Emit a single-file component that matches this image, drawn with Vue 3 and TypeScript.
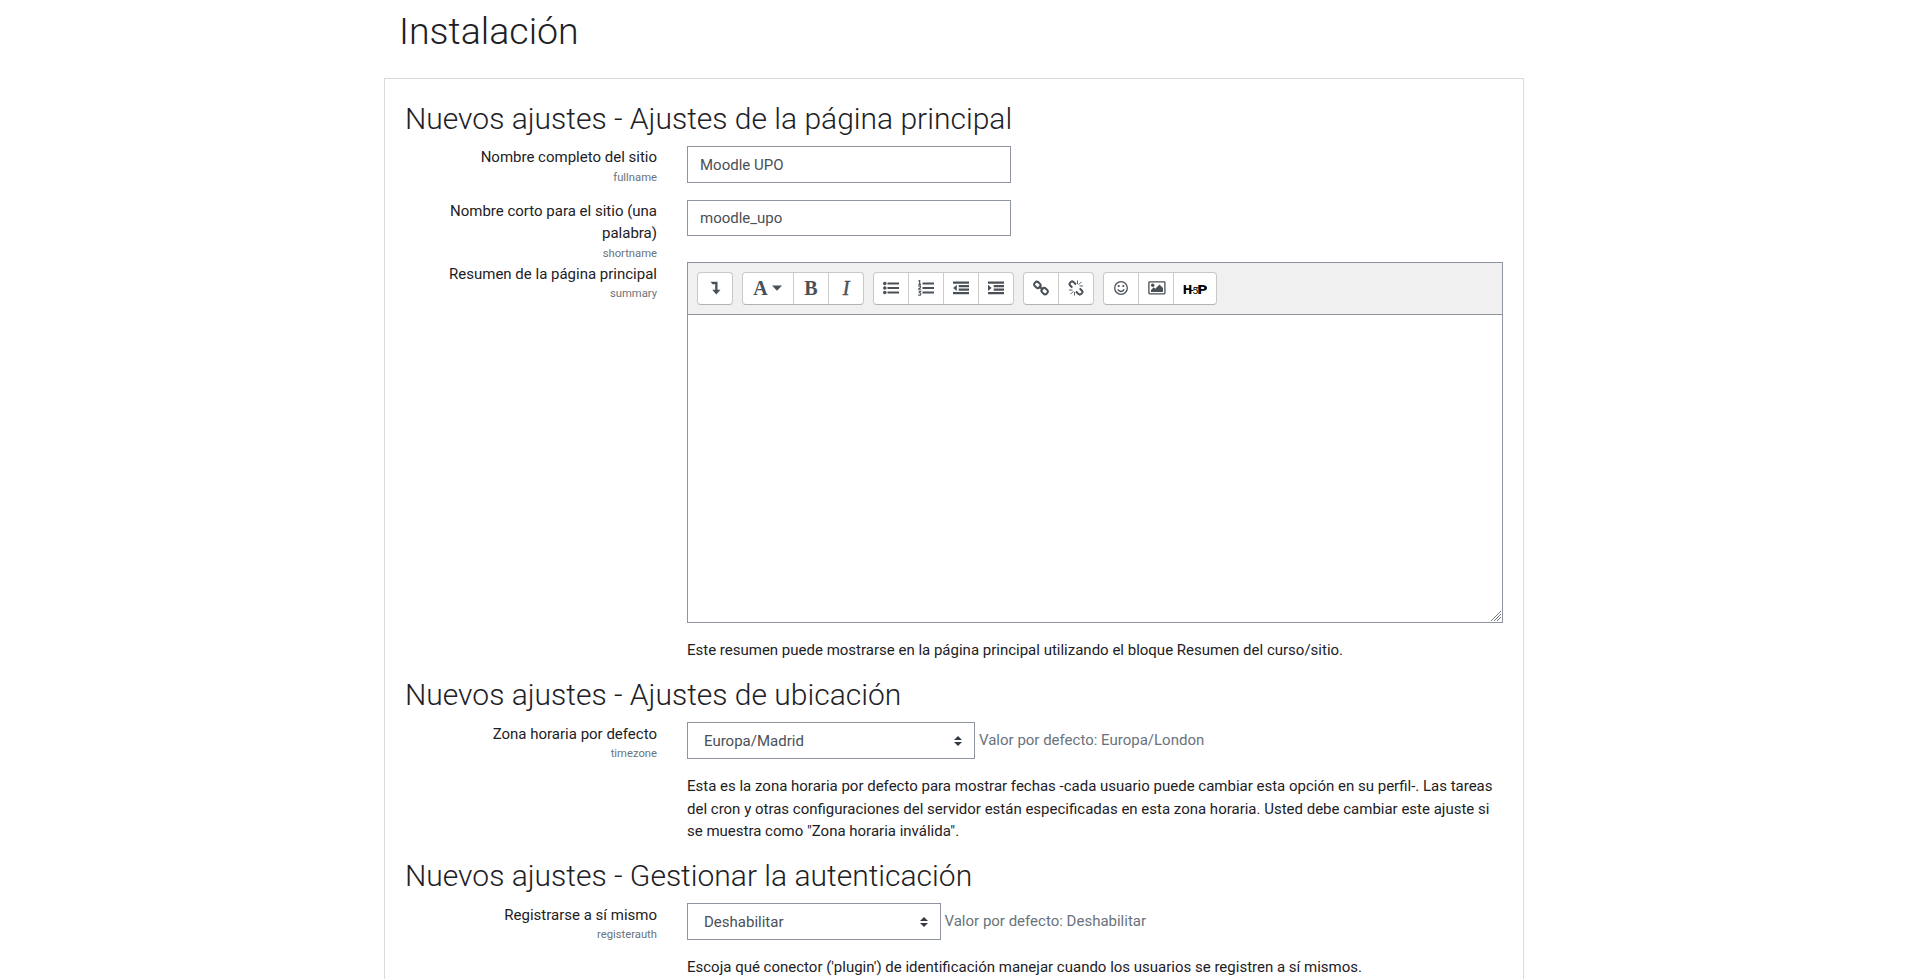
<script setup lang="ts">
interface Tool { name: string; wide?: string }
const groups: Tool[][] = [
  [{ name: 'collapse' }],
  [{ name: 'style', wide: 'w-style' }, { name: 'bold' }, { name: 'italic' }],
  [{ name: 'ul' }, { name: 'ol' }, { name: 'outdent' }, { name: 'indent' }],
  [{ name: 'link' }, { name: 'unlink' }],
  [{ name: 'smile' }, { name: 'image' }, { name: 'h5p', wide: 'w-h5p' }],
]
</script>

<template>
  <main class="page">
    <h1>Instalación</h1>
    <form class="card" @submit.prevent>
      <h3>Nuevos ajustes - Ajustes de la página principal</h3>
      <div class="row r-full">
        <div class="label">Nombre completo del sitio<small>fullname</small></div>
        <div class="field"><input type="text" value="Moodle UPO" /></div>
      </div>
      <div class="row r-short">
        <div class="label">Nombre corto para el sitio (una palabra)<small>shortname</small></div>
        <div class="field"><input type="text" value="moodle_upo" /></div>
      </div>
      <div class="row r-summary">
        <div class="label">Resumen de la página principal<small>summary</small></div>
        <div class="field">
          <div class="editor">
            <div class="toolbar">
              <div v-for="(g, i) in groups" :key="i" class="group">
                <button v-for="t in g" :key="t.name" type="button" :class="t.wide">
                  <svg v-if="t.name === 'collapse'" width="16" height="16" viewBox="0 0 16 16"><path d="M3.500 1.800h7v8h3L9.300 14.400 5.200 9.800h3V4.200H5.500z" /></svg>
                  <template v-else-if="t.name === 'style'">
                    <span class="ch">A</span>
                    <svg width="10" height="16" viewBox="0 0 10 16"><path d="M0 5.500h10L5 10.700z" /></svg>
                  </template>
                  <span v-else-if="t.name === 'bold'" class="ch">B</span>
                  <span v-else-if="t.name === 'italic'" class="ch it">I</span>
                  <svg v-else-if="t.name === 'ul'" width="16" height="16" viewBox="0 0 16 16"><circle cx="1.800" cy="3.500" r="1.800" /><circle cx="1.800" cy="8" r="1.800" /><circle cx="1.800" cy="12.500" r="1.800" /><path d="M4.500 2.400H16v2.200H4.500zM4.500 6.900H16v2.200H4.500zM4.500 11.400H16v2.200H4.500z" /></svg>
                  <svg v-else-if="t.name === 'ol'" width="16" height="16" viewBox="0 0 16 16"><path d="M4.500 2.400H16v2.200H4.500zM4.500 6.900H16v2.200H4.500zM4.500 11.400H16v2.200H4.500z" /><path class="num" d="M.5 1.300L1.700.500v3.900M.4 4.400h2.600M.4 6.700q.2-.8 1.200-.8 1.100 0 1.100.9 0 .7-2.200 2.500h2.500M.5 11.300h2.200l-1.200 1.400q1.400 0 1.400 1.200 0 1.300-1.400 1.300-.8 0-1.200-.5" /></svg>
                  <svg v-else-if="t.name === 'outdent'" width="16" height="16" viewBox="0 0 16 16"><path d="M0 1.500h16v2.200H0zM5.700 5h10.300v2.200H5.700zM5.700 8.500h10.300v2.200H5.700zM0 12h16v2.200H0zM.2 7.900l3.600-3.200v6.400z" /></svg>
                  <svg v-else-if="t.name === 'indent'" width="16" height="16" viewBox="0 0 16 16"><path d="M0 1.500h16v2.200H0zM5.700 5h10.300v2.200H5.700zM5.700 8.500h10.300v2.200H5.700zM0 12h16v2.200H0zM3.600 7.900L0 4.700v6.400z" /></svg>
                  <svg v-else-if="t.name === 'link'" width="16" height="16" viewBox="0 0 16 16"><g class="stroke"><rect x="1.100" y="2.300" width="6.600" height="5.200" rx="2.500" transform="rotate(45 4.400 4.900)" /><rect x="8.300" y="8.500" width="6.600" height="5.200" rx="2.500" transform="rotate(45 11.600 11.100)" /><path d="M6 6l4 4" /></g></svg>
                  <svg v-else-if="t.name === 'unlink'" width="16" height="16" viewBox="0 0 16 16"><path class="stroke" d="M4.300 7.600L2 5.300q-1-1.300 0-2.400l1-1q1.200-1 2.400 0l2.600 2.600M11.700 8.400L14 10.700q1 1.300 0 2.400l-1 1q-1.200 1-2.400 0L8 11.500" /><path class="thin" d="M5.500 11.200l-3 3M6.500 12v3.500M4.500 10H1M10.500 4.800l3-3M9.500 4V.500M11.500 6H15" /></svg>
                  <svg v-else-if="t.name === 'smile'" width="16" height="16" viewBox="0 0 16 16"><circle class="ring" cx="8" cy="8" r="6.300" /><circle cx="5.700" cy="6" r="1.100" /><circle cx="10.300" cy="6" r="1.100" /><path class="ring" d="M4.800 9.300q.9 2.200 3.200 2.200t3.200-2.200" /></svg>
                  <svg v-else-if="t.name === 'image'" class="pic" width="18" height="16" viewBox="0 0 18 16"><rect class="ring" x=".9" y="1.800" width="16" height="12" rx=".7" /><circle cx="4.700" cy="5.300" r="1.700" /><path d="M3 12v-2l2.800-2.800 1.500 1.500L11.500 4.500 15 8v4z" /></svg>
                  <svg v-else class="h5p" width="24" height="16" viewBox="0 0 24 16">
                    <text class="big" x="0" y="14.300" textLength="9" lengthAdjust="spacingAndGlyphs">H</text>
                    <text class="five" x="9.300" y="13.800" textLength="6" lengthAdjust="spacingAndGlyphs">5</text>
                    <text class="big" x="14.500" y="14.300" textLength="10" lengthAdjust="spacingAndGlyphs">P</text>
                    <path d="M8 10h2.500v1H8zM13 7.500h2.500v1H13z" />
                  </svg>
                </button>
              </div>
            </div>
            <div class="area">
              <svg class="grip" width="12" height="12" viewBox="0 0 12 12"><path d="M1 11L11 1M4 11l7-7M7 11l4-4" /></svg>
            </div>
          </div>
          <p>Este resumen puede mostrarse en la página principal utilizando el bloque Resumen del curso/sitio.</p>
        </div>
      </div>
      <h3>Nuevos ajustes - Ajustes de ubicación</h3>
      <div class="row r-zone">
        <div class="label">Zona horaria por defecto<small>timezone</small></div>
        <div class="field">
          <div class="line">
            <div class="select s-zone">Europa/Madrid<svg width="8" height="10" viewBox="0 0 4 5"><path d="M2 0L0 2h4zm0 5L0 3h4z" /></svg></div>
            <span>Valor por defecto: Europa/London</span>
          </div>
          <p>Esta es la zona horaria por defecto para mostrar fechas -cada usuario puede cambiar esta opción en su perfil-. Las tareas del cron y otras configuraciones del servidor están especificadas en esta zona horaria. Usted debe cambiar este ajuste si se muestra como "Zona horaria inválida".</p>
        </div>
      </div>
      <h3>Nuevos ajustes - Gestionar la autenticación</h3>
      <div class="row r-auth">
        <div class="label">Registrarse a sí mismo<small>registerauth</small></div>
        <div class="field">
          <div class="line">
            <div class="select s-auth">Deshabilitar<svg width="8" height="10" viewBox="0 0 4 5"><path d="M2 0L0 2h4zm0 5L0 3h4z" /></svg></div>
            <span>Valor por defecto: Deshabilitar</span>
          </div>
          <p>Escoja qué conector ('plugin') de identificación manejar cuando los usuarios se registren a sí mismos.</p>
        </div>
      </div>
    </form>
  </main>
</template>

<style>
html, body { margin: 0; background: #fff; overflow: hidden; }
</style>

<style scoped>
* { box-sizing: border-box; }
.page { width: 1140px; height: 979px; overflow: hidden; margin: 0 auto; font: 400 15px/22.5px Roboto, sans-serif; color: #1d2125; }
h1 { margin: 0; padding: 9px 15px 0; height: 78px; font-size: 37.5px; line-height: 45px; font-weight: 300; }
.card { border: 1px solid #dbdbdb; padding: 21.500px 20px; height: 1000px; }
h3 { margin: 0 0 9.750px; font-size: 30px; line-height: 36px; font-weight: 300; }
.row { display: grid; grid-template-columns: 252px 816px; column-gap: 30px; }
.r-full { height: 53.400px; }
.r-short { height: 62.350px; }
.r-summary { height: 414.750px; }
.r-summary .label { padding-top: .750px; }
.r-zone { height: 135.250px; }
.r-zone .label, .r-auth .label { padding-top: .500px; }
.r-zone p { margin-top: 16.050px; }
.label { text-align: right; }
.label small { display: block; font-size: 11.250px; line-height: 17px; color: #6a737b; }
input { display: block; width: 324px; height: 36.500px; padding: 6px 12px; border: 1px solid #8f959e; font: inherit; color: #495057; background: #fff; outline: 0; border-radius: 0; }
.r-short input { height: 36px; }
p { margin: 16px 0 0; }
.editor { border: 1px solid #8f959e; height: 361px; }
.toolbar { display: flex; gap: 9px; padding: 9px; height: 52px; background: #f0f0f0; border-bottom: 1px solid #8f959e; }
.group { display: flex; height: 33px; background: #fff; border: 1px solid #c8c8c8; border-bottom-color: #b3b3b3; border-radius: 4px; }
button { display: flex; align-items: center; justify-content: center; width: 35px; padding: 0; border: 0; border-left: 1px solid #ccc; background: none; color: #495057; font: inherit; }
button:first-child { border-left: 0; width: 34px; }
button.w-style { width: 50px; gap: 4px; padding-right: 1px; }
button.w-h5p { width: 43px; }
svg { display: block; flex: none; fill: currentColor; }
.pic { margin-left: 1px; }
.ch { font: bold 20px/20px "Liberation Serif", serif; }
.it { font-style: italic; font-weight: 400; -webkit-text-stroke: .5px currentColor; }
.thin { fill: none; stroke: currentColor; stroke-width: .9; }
.num { fill: none; stroke: currentColor; stroke-width: 1.100; }
.stroke { fill: none; stroke: currentColor; stroke-width: 2; }
.ring { fill: none; stroke: currentColor; stroke-width: 1.300; }
.h5p { color: #000; font-family: Roboto, sans-serif; }
.big { font-size: 13.500px; font-weight: 900; }
.five { font-size: 9.500px; font-weight: 400; }
.area { position: relative; height: 307px; }
.grip { position: absolute; right: 0; bottom: 0; fill: none; stroke: #777; stroke-width: 1; }
.line { display: flex; gap: 4px; color: #6a737b; }
.line span { padding-top: 6.500px; }
.select { display: flex; align-items: center; justify-content: space-between; height: 36.500px; padding: 1px 12px 0 16px; border: 1px solid #8f959e; color: #495057; }
.select svg { color: #343a40; }
.s-zone { width: 288px; }
.s-auth { width: 253.500px; }
</style>
